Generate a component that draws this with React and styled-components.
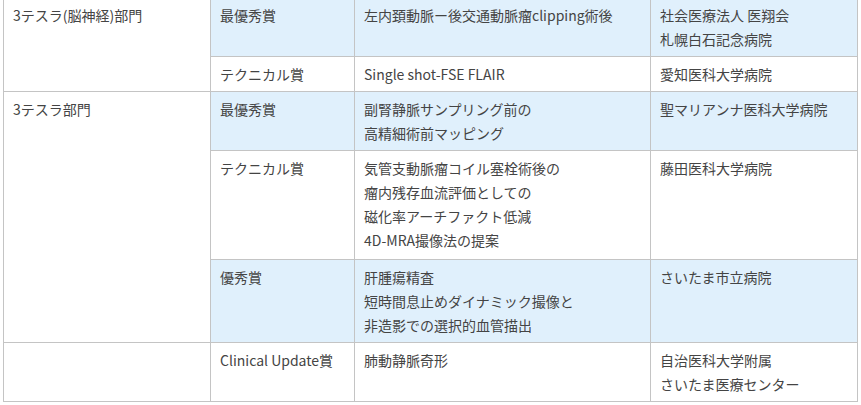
import { createGlobalStyle, styled } from 'styled-components';

const GlobalStyle = createGlobalStyle`
  body {
    margin: 0;
    background: #fff;
    font-family: "Noto Sans CJK JP", "Noto Sans", sans-serif;
    color: #444;
  }
`

const Wrapper = styled.div`
  padding: 0 4px 0 3px;
  margin-top: -3px;
`

const Table = styled.table`
  width: 854px;
  border-collapse: collapse;
  table-layout: fixed;
  font-size: 14px;
  line-height: 24px;
`

const Col = styled.col`
  width: ${({ w }) => w}px;
`

const Cell = styled.td`
  border: 1px solid #c4c4c4;
  padding: 5px 10px ${({ extra }) => 5 + (extra || 0)}px 9px;
  vertical-align: top;
  background: ${({ highlight }) => (highlight ? '#e0f0fc' : '#fff')};
`

const Line = styled.span`
  display: block;
`

const awards = [
  {
    division: '3テスラ(脳神経)部門',
    span: 2,
    rows: [
      { prize: '最優秀賞', title: ['左内頚動脈ー後交通動脈瘤clipping術後'], org: ['社会医療法人 医翔会', '札幌白石記念病院'], highlight: true },
      { prize: 'テクニカル賞', title: ['Single shot-FSE FLAIR'], org: ['愛知医科大学病院'] },
    ],
  },
  {
    division: '3テスラ部門',
    span: 3,
    rows: [
      { prize: '最優秀賞', title: ['副腎静脈サンプリング前の', '高精細術前マッピング'], org: ['聖マリアンナ医科大学病院'], highlight: true },
      { prize: 'テクニカル賞', title: ['気管支動脈瘤コイル塞栓術後の', '瘤内残存血流評価としての', '磁化率アーチファクト低減', '4D-MRA撮像法の提案'], org: ['藤田医科大学病院'], extra: 2 },
      { prize: '優秀賞', title: ['肝腫瘍精査', '短時間息止めダイナミック撮像と', '非造影での選択的血管描出'], org: ['さいたま市立病院'], highlight: true },
    ],
  },
  {
    division: '',
    span: 1,
    rows: [
      { prize: 'Clinical Update賞', title: ['肺動静脈奇形'], org: ['自治医科大学附属', 'さいたま医療センター'] },
    ],
  },
]

const columns = [207, 144, 296, 207]

function Lines({ items }) {
  return items.map((text) => <Line key={text}>{text}</Line>)
}

export default function App() {
  return (
    <Wrapper>
      <GlobalStyle />
      <Table>
        <colgroup>
          {columns.map((w, i) => <Col key={i} w={w} />)}
        </colgroup>
        <tbody>
          {awards.map((group) =>
            group.rows.map((row, i) => (
              <tr key={group.division + row.prize + i}>
                {i === 0 && <Cell rowSpan={group.span}>{group.division}</Cell>}
                <Cell highlight={row.highlight} extra={row.extra}>{row.prize}</Cell>
                <Cell highlight={row.highlight} extra={row.extra}><Lines items={row.title} /></Cell>
                <Cell highlight={row.highlight} extra={row.extra}><Lines items={row.org} /></Cell>
              </tr>
            ))
          )}
        </tbody>
      </Table>
    </Wrapper>
  );
}
